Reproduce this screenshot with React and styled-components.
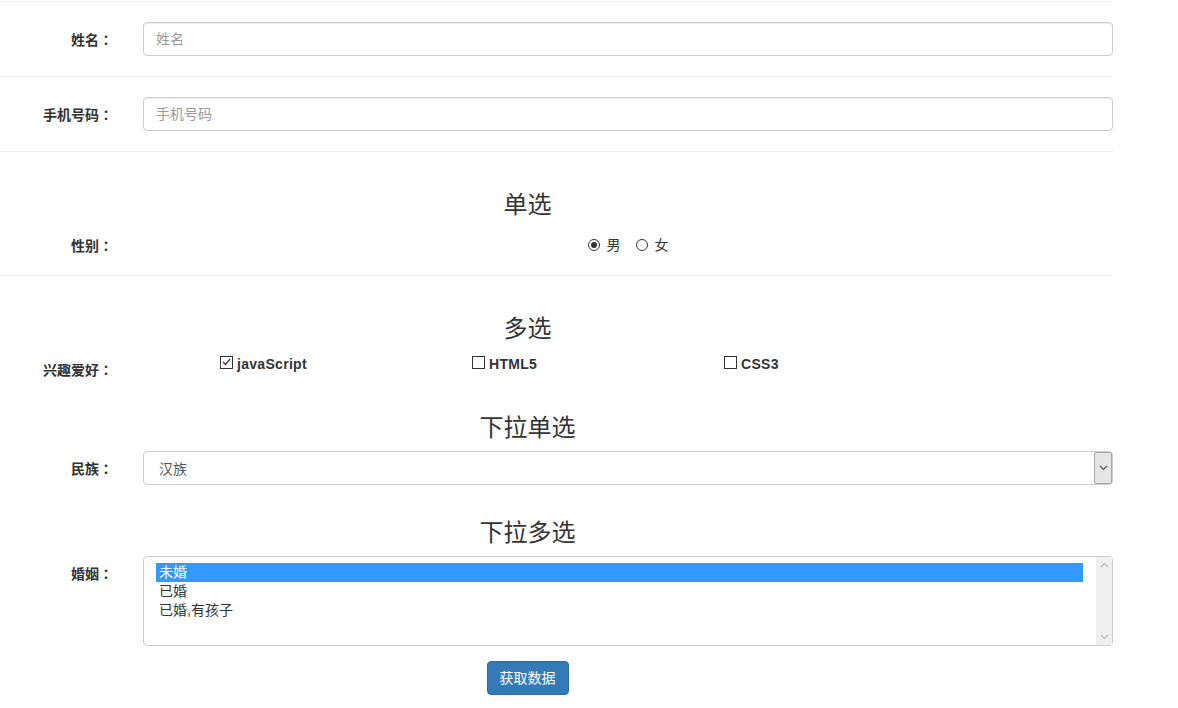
import styled, { createGlobalStyle } from "styled-components";

const GlobalStyle = createGlobalStyle`
  body {
    margin: 0;
    background: #fff;
    color: #333;
    font-family: "Liberation Sans", "Noto Sans CJK SC", sans-serif;
    font-size: 14px;
    line-height: 20px;
  }
`;

const Form = styled.form`
  width: 1113px;
  padding-top: 1px;
`;

const Group = styled.div`
  border-top: ${(p) => (p.$line ? "1px solid #eee" : "none")};
  padding-top: ${(p) => p.$top || 0}px;
  padding-bottom: ${(p) => p.$bottom || 0}px;
`;

const Title = styled.h3`
  width: 1055px;
  margin: 0 0 10px;
  text-align: center;
  font-size: 24px;
  font-weight: 400;
  line-height: 26px;
  color: #333;
`;

const Row = styled.div`
  display: flex;
  align-items: flex-start;
  min-height: 34px;
`;

const Label = styled.label`
  width: 128px;
  flex-shrink: 0;
  box-sizing: border-box;
  padding: 7px 15px 0 0;
  text-align: right;
  font-weight: 700;
  line-height: 20px;
  white-space: nowrap;
  clip-path: ${(p) => (p.$clipped ? "inset(12px 0 0 0)" : "none")};
`;

const Colon = styled.span`
  display: inline-block;
  width: 14px;
  text-align: center;
  font-family: "Noto Sans CJK JP", sans-serif;
`;

const Field = styled.div`
  width: 970px;
  margin-left: 15px;
`;

const TextInput = styled.input`
  display: block;
  width: 100%;
  height: 34px;
  box-sizing: border-box;
  padding: 6px 12px;
  border: 1px solid #ccc;
  border-radius: 4px;
  box-shadow: inset 0 1px 1px rgba(0, 0, 0, 0.075);
  font-family: inherit;
  font-size: 14px;
  color: #555;
  &::placeholder {
    color: #999;
  }
`;

const RadioGroup = styled.div`
  display: flex;
  justify-content: center;
  align-items: center;
  gap: 15px;
  height: 34px;
`;

const RadioItem = styled.span`
  display: inline-flex;
  align-items: center;
  gap: 7px;
`;

const RadioDot = styled.span`
  width: 10px;
  height: 10px;
  border: 1px solid #333;
  border-radius: 50%;
  display: inline-flex;
  align-items: center;
  justify-content: center;
  &::after {
    content: "";
    width: 6px;
    height: 6px;
    border-radius: 50%;
    background: ${(p) => (p.$checked ? "#333" : "transparent")};
  }
`;

const CheckGrid = styled.div`
  display: grid;
  grid-template-columns: 252px 252px 252px;
  padding: 2px 0 0 77px;
  margin-left: 15px;
`;

const CheckItem = styled.span`
  display: inline-flex;
  align-items: center;
  gap: 4px;
  font-weight: 700;
  line-height: 20px;
  letter-spacing: 0.3px;
  font-family: "Liberation Sans", Arial, sans-serif;
`;

const CheckBox = styled.span`
  width: 11px;
  height: 11px;
  border: 1px solid #333;
  display: inline-flex;
  align-items: center;
  justify-content: center;
  margin-top: -4px;
`;

const Select = styled.div`
  position: relative;
  height: 34px;
  box-sizing: border-box;
  border: 1px solid #ccc;
  border-radius: 4px;
  padding: 7px 15px;
  color: #555;
`;

const SelectArrow = styled.span`
  position: absolute;
  top: 0;
  right: 0;
  bottom: 0;
  width: 16px;
  background: #e5e5e5;
  border: 1px solid #a9a9a9;
  border-radius: 2px;
  display: flex;
  align-items: center;
  justify-content: center;
`;

const ListBox = styled.div`
  position: relative;
  height: 90px;
  box-sizing: border-box;
  border: 1px solid #ccc;
  border-radius: 4px;
  padding: 6px 29px 0 12px;
`;

const Option = styled.div`
  height: 19px;
  line-height: 19px;
  padding-left: 3px;
  background: ${(p) => (p.$selected ? "#3399ff" : "transparent")};
  color: ${(p) => (p.$selected ? "#fff" : "#333")};
`;

const ScrollBar = styled.div`
  position: absolute;
  top: 0;
  right: 0;
  bottom: 0;
  width: 16px;
  background: #f0f0f0;
  display: flex;
  flex-direction: column;
  justify-content: space-between;
  align-items: center;
  padding: 5px 0;
  box-sizing: border-box;
`;

const ButtonRow = styled.div`
  width: 1055px;
  display: flex;
  justify-content: center;
  padding-top: 15px;
`;

const Button = styled.button`
  height: 34px;
  padding: 6px 12px;
  border: 1px solid #2e6da4;
  border-radius: 4px;
  background: #337ab7;
  color: #fff;
  font-family: inherit;
  font-size: 14px;
  line-height: 20px;
  cursor: pointer;
`;

const Chevron = ({ up, color = "#777" }) => (
  <svg width="9" height="6" viewBox="0 0 9 6">
    <path
      d={up ? "M1 5 L4.5 1.5 L8 5" : "M1 1 L4.5 4.5 L8 1"}
      fill="none"
      stroke={color}
      strokeWidth="1.2"
    />
  </svg>
);

const Check = () => (
  <svg width="9" height="8" viewBox="0 0 9 8">
    <path d="M1 4 L3.5 6.5 L8 1" fill="none" stroke="#333" strokeWidth="1.2" />
  </svg>
);

const FieldLabel = ({ children, clipped }) => (
  <Label $clipped={clipped}>
    {children}
    <Colon>：</Colon>
  </Label>
);

const hobbies = [
  { name: "javaScript", checked: true },
  { name: "HTML5" },
  { name: "CSS3" },
];

const marriage = ["未婚", "已婚", "已婚,有孩子"];

export default function App() {
  return (
    <>
      <GlobalStyle />
      <Form onSubmit={(e) => e.preventDefault()}>
        <Group $line $top={20} $bottom={20}>
          <Row>
            <FieldLabel>姓名</FieldLabel>
            <Field>
              <TextInput placeholder="姓名" />
            </Field>
          </Row>
        </Group>
        <Group $line $top={20} $bottom={20}>
          <Row>
            <FieldLabel>手机号码</FieldLabel>
            <Field>
              <TextInput placeholder="手机号码" />
            </Field>
          </Row>
        </Group>
        <Group $line $top={40} $bottom={13}>
          <Title>单选</Title>
          <Row>
            <FieldLabel>性别</FieldLabel>
            <Field>
              <RadioGroup>
                <RadioItem>
                  <RadioDot $checked />男
                </RadioItem>
                <RadioItem>
                  <RadioDot />女
                </RadioItem>
              </RadioGroup>
            </Field>
          </Row>
        </Group>
        <Group $line $top={40}>
          <Title>多选</Title>
          <Row>
            <FieldLabel clipped>兴趣爱好</FieldLabel>
            <CheckGrid>
              {hobbies.map((h) => (
                <CheckItem key={h.name}>
                  <CheckBox>{h.checked && <Check />}</CheckBox>
                  {h.name}
                </CheckItem>
              ))}
            </CheckGrid>
          </Row>
        </Group>
        <Group $top={29}>
          <Title>下拉单选</Title>
          <Row>
            <FieldLabel>民族</FieldLabel>
            <Field>
              <Select>
                汉族
                <SelectArrow>
                  <Chevron color="#555" />
                </SelectArrow>
              </Select>
            </Field>
          </Row>
        </Group>
        <Group $top={35}>
          <Title>下拉多选</Title>
          <Row>
            <FieldLabel>婚姻</FieldLabel>
            <Field>
              <ListBox>
                {marriage.map((m, i) => (
                  <Option key={m} $selected={i === 0}>
                    {m}
                  </Option>
                ))}
                <ScrollBar>
                  <Chevron up color="#bbb" />
                  <Chevron color="#bbb" />
                </ScrollBar>
              </ListBox>
            </Field>
          </Row>
        </Group>
        <ButtonRow>
          <Button type="button">获取数据</Button>
        </ButtonRow>
      </Form>
    </>
  );
}
